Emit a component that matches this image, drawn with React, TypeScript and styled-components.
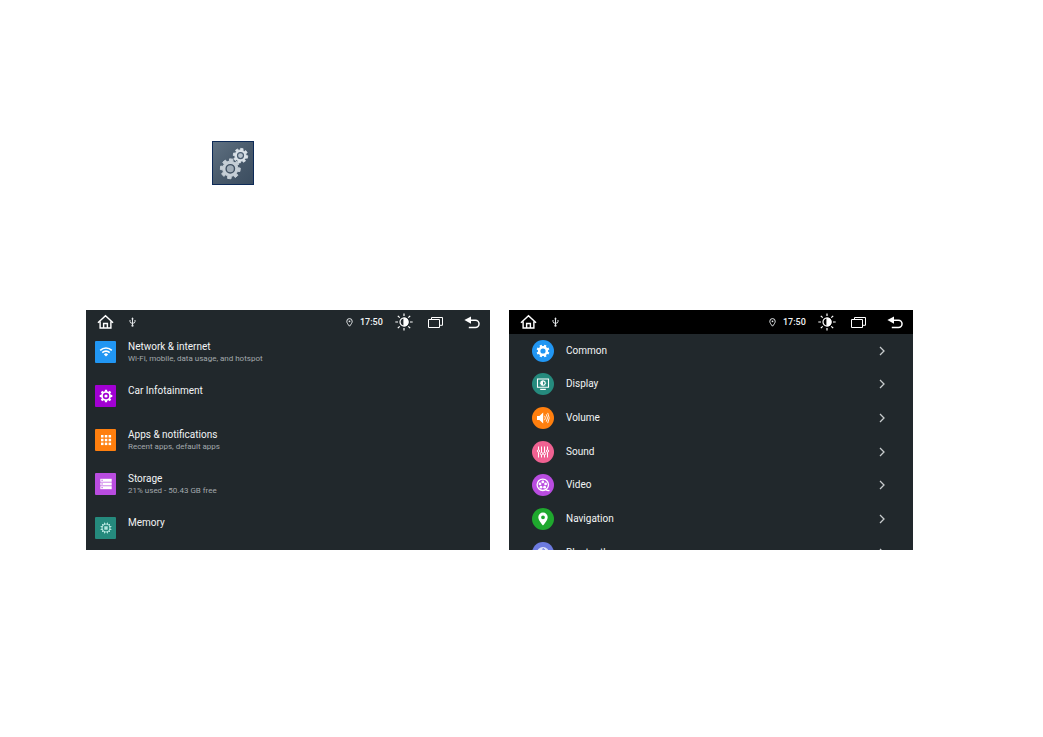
import React from 'react';
import styled, { createGlobalStyle } from 'styled-components';

const GlobalStyle = createGlobalStyle`
  * { box-sizing: border-box; }
  body { margin: 0; background: #fff; font-family: Roboto, "Liberation Sans", sans-serif; }
`;

const Page = styled.main`
  padding: 141px 130px 141px 86px;
`;

const AppIcon = styled.button`
  display: block;
  width: 42px;
  height: 44px;
  margin: 0 0 125px 126px;
  padding: 0;
  border: 1px solid #0d2a57;
  background: linear-gradient(135deg, #5f7182 0%, #4a5b6c 50%, #3b4d60 100%);
`;

const Screens = styled.div`
  display: grid;
  grid-template-columns: 1fr 1fr;
  gap: 19px;
`;

const Screen = styled.section`
  display: flex;
  flex-direction: column;
  height: 240px;
  overflow: hidden;
  background: #21282c;
  color: #f2f4f5;
`;

const Bar = styled.header<{ $dark?: boolean }>`
  display: flex;
  align-items: center;
  flex: none;
  height: 24px;
  padding: 0 10px 0 11px;
  background: ${p => (p.$dark ? '#000' : 'transparent')};
`;

const BarGroup = styled.div<{ $gap: number; $end?: boolean }>`
  display: flex;
  align-items: center;
  gap: ${p => p.$gap}px;
  margin-left: ${p => (p.$end ? 'auto' : '0')};
`;

const BarButton = styled.button`
  display: flex;
  padding: 0;
  border: 0;
  background: none;
  color: #fff;
`;

const BackButton = styled(BarButton)`
  margin-left: 20px;
`;

const Clock = styled.time`
  width: 22px;
  margin: 0 13px 0 7px;
  font-size: 9px;
  font-weight: 500;
  line-height: 12px;
  white-space: nowrap;
`;

const List = styled.ul`
  flex: 1;
  min-height: 0;
  margin: 0;
  padding: 0;
  list-style: none;
  overflow: hidden;
`;

const CircleList = styled(List)`
  display: grid;
  grid-auto-rows: calc(100% / 6.42);
`;

const SettingRow = styled.button`
  display: flex;
  align-items: flex-start;
  gap: 12px;
  width: 100%;
  height: 44px;
  padding: 7px 9px;
  border: 0;
  background: none;
  color: inherit;
  font-family: inherit;
  text-align: left;
`;

const Tile = styled.span<{ $color: string }>`
  display: flex;
  flex: none;
  width: 21px;
  height: 22px;
  align-items: center;
  justify-content: center;
  border-radius: 1px;
  background: ${p => p.$color};
`;

const Labels = styled.span`
  display: flex;
  flex-direction: column;
  line-height: 12px;
`;

const Title = styled.span`
  font-size: 10px;
  font-weight: 400;
`;

const Detail = styled.span`
  font-size: 8px;
  color: #a3a9ac;
`;

const CategoryRow = styled.button`
  display: flex;
  align-items: center;
  gap: 12px;
  width: 100%;
  height: 100%;
  padding: 0 28px 0 23px;
  border: 0;
  background: none;
  color: inherit;
  font-family: inherit;
  font-size: 10px;
  line-height: 14px;
  text-align: left;
`;

const Disc = styled.span<{ $color: string }>`
  display: flex;
  flex: none;
  width: 22px;
  height: 22px;
  align-items: center;
  justify-content: center;
  border-radius: 50%;
  background: ${p => p.$color};
`;

const Name = styled.span`
  flex: 1;
`;

const gear = (cx: number, cy: number, r: number, depth: number, teeth: number, turn = 0) => {
  const step = (Math.PI * 2) / teeth;
  const points: string[] = [];
  for (let i = 0; i < teeth; i++) {
    const a = i * step + turn;
    [[-0.3, r - depth], [-0.22, r], [0.22, r], [0.3, r - depth]].forEach(([k, d]) => {
      points.push(`${(cx + Math.cos(a + k * step) * d).toFixed(2)} ${(cy + Math.sin(a + k * step) * d).toFixed(2)}`);
    });
  }
  return `M${points.join('L')}Z`;
};

const Gears = () => (
  <svg width="40" height="42" viewBox="0 0 40 42" strokeLinejoin="round" aria-hidden="true">
    <path d={gear(17.3, 26.8, 10, 2.4, 8, 0.1)} fill="#c5ced6" stroke="#c5ced6" />
    <circle cx="17.3" cy="26.8" r="4.2" fill="#a3afba" stroke="#405163" strokeWidth="1.4" />
    <path d={gear(27.5, 13.6, 7.3, 1.7, 8, 0.2)} fill="#dbe2e8" stroke="#dbe2e8" strokeWidth=".8" />
    <circle cx="27.5" cy="13.6" r="3" fill="#b9c4ce" stroke="#4b5d70" strokeWidth="1.2" />
  </svg>
);

const Home = () => (
  <svg width="17" height="16" viewBox="0 0 18 16" fill="none" stroke="currentColor" strokeWidth="1.5" aria-hidden="true">
    <path d="M1 8.8 9 1.3l8 7.5M3.3 7.4v7h11.4v-7M7 14.2V9.5h4v4.7" />
  </svg>
);

const Usb = () => (
  <svg width="7" height="10" viewBox="0 0 7 10" fill="none" stroke="#e5e8ea" aria-hidden="true">
    <path d="M3.5 1v8M1 3v1.6q0 1.7 2.5 1.7T6 4.6V3" />
    <path d="M2.2 2.2 3.5.2l1.3 2Z" fill="#e5e8ea" stroke="none" />
    <circle cx="3.5" cy="8.7" r="1.1" fill="#e5e8ea" stroke="none" />
  </svg>
);

const Pin = () => (
  <svg width="7" height="9" viewBox="0 0 7 9" fill="none" stroke="#e5e8ea" aria-hidden="true">
    <path d="M3.5 8.2C1.8 6.2.8 4.7.8 3.3a2.7 2.7 0 0 1 5.4 0c0 1.4-1 2.9-2.7 4.9Z" />
    <circle cx="3.5" cy="3.3" r=".9" fill="#e5e8ea" stroke="none" />
  </svg>
);

const Brightness = () => (
  <svg width="18" height="18" viewBox="0 0 18 18" fill="none" stroke="currentColor" strokeWidth="1.2" aria-hidden="true">
    <circle cx="9" cy="9" r="4" />
    <path d="M9 5a4 4 0 0 1 0 8Z" fill="currentColor" />
    <path d="M9 .5v2.6M9 14.9v2.6M.3 9H3M15 9h2.7M2.8 2.8l1.9 1.9M13.3 13.3l1.9 1.9M2.8 15.2l1.9-1.9M13.3 4.7l1.9-1.9" />
  </svg>
);

const Recents = () => (
  <svg width="16" height="13" viewBox="0 0 16 13" fill="none" stroke="currentColor" aria-hidden="true">
    <path d="M.5 3.5h11v8H.5ZM3.5 3.5v-2h11v7.8h-3" />
  </svg>
);

const Back = () => (
  <svg width="16" height="13" viewBox="0 0 16 13" fill="none" stroke="currentColor" strokeWidth="1.5" aria-hidden="true">
    <path d="M6 4.2h5.4a3.6 3.6 0 0 1 0 7.3H4.8" />
    <path d="M7 .4v7.4L.4 4.1Z" fill="currentColor" stroke="none" />
  </svg>
);

const Chevron = () => (
  <svg width="6" height="10" viewBox="0 0 6 10" fill="none" stroke="#c7cbcd" strokeWidth="1.3" aria-hidden="true">
    <path d="m1 1 4 4-4 4" />
  </svg>
);

const Glyph = ({ children }: { children: React.ReactNode }) => (
  <svg width="14" height="14" viewBox="0 0 14 14" fill="none" stroke="#fff" aria-hidden="true">{children}</svg>
);

const wifi = (
  <Glyph>
    <path d="M1.2 5.3a8.4 8.4 0 0 1 11.6 0M3.3 7.6a5.3 5.3 0 0 1 7.4 0" strokeWidth="1.6" />
    <path d="M4.9 9.4a3 3 0 0 1 4.2 0L7 11.6Z" fill="#fff" stroke="none" />
  </Glyph>
);

const carGear = (
  <Glyph>
    <path d={gear(7, 7, 6.4, 1.5, 8)} fill="#fff" stroke="none" />
    <circle cx="7" cy="7" r="3.2" fill="#a200d4" stroke="none" />
    <circle cx="7" cy="7" r="1.6" fill="#fff" stroke="none" />
  </Glyph>
);

const apps = (
  <Glyph>
    {[2, 5.8, 9.6].map(y => [2, 5.8, 9.6].map(x => (
      <rect key={`${x}-${y}`} x={x} y={y} width="2.5" height="2.5" fill="#fff" stroke="none" />
    )))}
  </Glyph>
);

const storage = (
  <Glyph>
    {[1.8, 5.5, 9.2].map(y => (
      <g key={y} stroke="none">
        <rect x="1.3" y={y} width="11.4" height="3" fill="#fff" />
        <rect x="2.5" y={y + 0.9} width="1.2" height="1.1" fill="#b94ce0" />
      </g>
    ))}
  </Glyph>
);

const memory = (
  <Glyph>
    <g stroke="#b4e6df">
      <circle cx="7" cy="7" r="4" strokeWidth="1.2" />
      <rect x="5.3" y="5.3" width="3.4" height="3.4" fill="#b4e6df" stroke="none" />
      <path d="M5.5 1.6v2M8.5 1.6v2M5.5 10.4v2M8.5 10.4v2M1.6 5.5h2M1.6 8.5h2M10.4 5.5h2M10.4 8.5h2M3 3l1 1M11 3l-1 1M3 11l1-1M11 11l-1-1" />
    </g>
  </Glyph>
);

const common = (
  <Glyph>
    <path d={gear(7, 7, 6.5, 1.4, 8, 0.39)} fill="#fff" stroke="none" />
    <circle cx="7" cy="7" r="2.6" fill="#2196f3" stroke="none" />
  </Glyph>
);

const display = (
  <Glyph>
    <path d="M1.5 2h11v8.2h-11ZM4.2 12.4h5.6" strokeWidth="1.1" />
    <path d={gear(7, 6.1, 3.2, 0.7, 8)} fill="#fff" stroke="none" />
    <path d="M7 4.4a1.7 1.7 0 0 1 0 3.4Z" fill="#258a7d" stroke="none" />
  </Glyph>
);

const volume = (
  <Glyph>
    <path d="M1 4.9h2.4L7.2 1.6v10.8L3.4 9.1H1Z" fill="#fff" stroke="none" />
    <path d="M8.6 4.8q1.5 2.2 0 4.4M10.2 3.3q2.6 3.7 0 7.4M11.7 1.9q3 5 0 10.2" strokeWidth=".9" />
  </Glyph>
);

const sound = (
  <Glyph>
    <path d="M2.5 1.5v11M5.5 1.5v11M8.5 1.5v11M11.5 1.5v11" />
    <g fill="#f06292">
      <circle cx="2.5" cy="6" r="1.2" />
      <circle cx="5.5" cy="8.6" r="1.2" />
      <circle cx="8.5" cy="8.6" r="1.2" />
      <circle cx="11.5" cy="6" r="1.2" />
    </g>
  </Glyph>
);

const video = (
  <Glyph>
    <circle cx="6.8" cy="6.8" r="5.7" strokeWidth="1.3" />
    <g fill="#fff" stroke="none">
      <circle cx="6.8" cy="3.9" r="1.4" />
      <circle cx="9.6" cy="5.9" r="1.4" />
      <circle cx="8.6" cy="9.2" r="1.4" />
      <circle cx="5" cy="9.2" r="1.4" />
      <circle cx="4" cy="5.9" r="1.4" />
    </g>
    <path d="M9.5 11.2q2 1.8 4 1.2" strokeWidth="1.3" />
  </Glyph>
);

const navigation = (
  <Glyph>
    <path fillRule="evenodd" d="M7 .6a4.7 4.7 0 0 0-4.7 4.7C2.3 8.5 7 13.6 7 13.6s4.7-5.1 4.7-8.3A4.7 4.7 0 0 0 7 .6Zm0 2.8a1.9 1.9 0 1 1 0 3.8 1.9 1.9 0 0 1 0-3.8Z" fill="#fff" stroke="none" />
  </Glyph>
);

const bluetooth = (
  <Glyph>
    <circle cx="7" cy="7" r="6" fill="#dfe3fb" stroke="none" />
    <path d="m4.4 4.6 5 4.8L7 11.6V2.4l2.4 2.2-5 4.8" stroke="#6d7be0" />
  </Glyph>
);

const settings = [
  { title: 'Network & internet', detail: 'Wi-Fi, mobile, data usage, and hotspot', color: '#2196f3', icon: wifi },
  { title: 'Car Infotainment', color: '#a200d4', icon: carGear },
  { title: 'Apps & notifications', detail: 'Recent apps, default apps', color: '#ff7f0e', icon: apps },
  { title: 'Storage', detail: '21% used - 50.43 GB free', color: '#b94ce0', icon: storage },
  { title: 'Memory', color: '#258a7d', icon: memory },
];

const categories = [
  { name: 'Common', color: '#2196f3', icon: common },
  { name: 'Display', color: '#258a7d', icon: display },
  { name: 'Volume', color: '#ff7f0e', icon: volume },
  { name: 'Sound', color: '#f06292', icon: sound },
  { name: 'Video', color: '#b94ce0', icon: video },
  { name: 'Navigation', color: '#1fa82e', icon: navigation },
  { name: 'Bluetooth', color: '#6d7be0', icon: bluetooth },
];

const StatusBar = ({ dark }: { dark?: boolean }) => (
  <Bar $dark={dark}>
    <BarGroup $gap={15}>
      <BarButton aria-label="Home"><Home /></BarButton>
      <Usb />
    </BarGroup>
    <BarGroup $gap={0} $end>
      <Pin />
      <Clock>17:50</Clock>
    </BarGroup>
    <BarGroup $gap={15}>
      <BarButton aria-label="Brightness"><Brightness /></BarButton>
      <BarButton aria-label="Recent apps"><Recents /></BarButton>
    </BarGroup>
    <BackButton aria-label="Back"><Back /></BackButton>
  </Bar>
);

export default function App() {
  return (
    <>
      <GlobalStyle />
      <Page>
        <AppIcon aria-label="Settings"><Gears /></AppIcon>
        <Screens>
          <Screen>
            <StatusBar />
            <List>
              {settings.map(s => (
                <li key={s.title}>
                  <SettingRow>
                    <Tile $color={s.color}>{s.icon}</Tile>
                    <Labels>
                      <Title>{s.title}</Title>
                      {s.detail && <Detail>{s.detail}</Detail>}
                    </Labels>
                  </SettingRow>
                </li>
              ))}
            </List>
          </Screen>
          <Screen>
            <StatusBar dark />
            <CircleList>
              {categories.map(c => (
                <li key={c.name}>
                  <CategoryRow>
                    <Disc $color={c.color}>{c.icon}</Disc>
                    <Name>{c.name}</Name>
                    <Chevron />
                  </CategoryRow>
                </li>
              ))}
            </CircleList>
          </Screen>
        </Screens>
      </Page>
    </>
  );
}
